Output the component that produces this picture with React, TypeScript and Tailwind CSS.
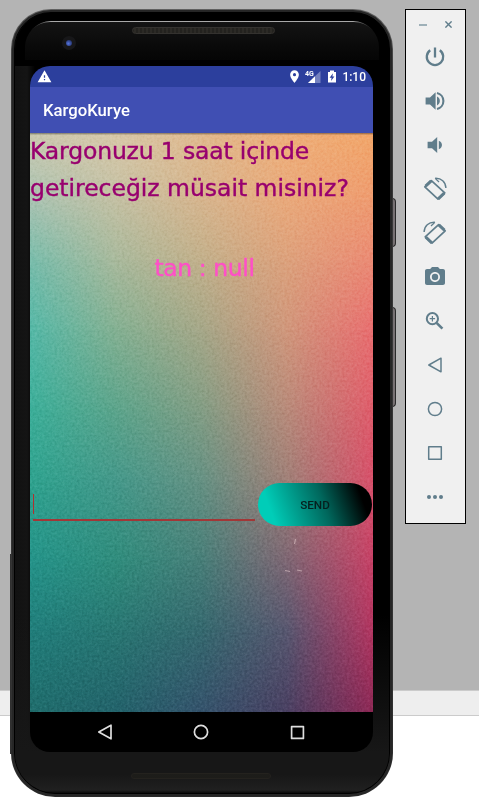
import React from "react";
import {
  MdPhotoCamera,
  MdWarning,
  MdLocationOn,
} from "react-icons/md";

// Wallpaper colours, sampled on a grid; each row is [y, colours from left to right].
const mesh: [number, string[]][] = [
  [0, ["#cbc9b0", "#d8c8a9", "#e0b98e", "#eeaf7a", "#f2a76a"]],
  [67, ["#a9c3b2", "#c3c0a3", "#d6b58e", "#e9a97b", "#ee9b70"]],
  [127, ["#78bcab", "#a8b99c", "#c2b08b", "#dca17c", "#eb8a74"]],
  [197, ["#54b8a7", "#83b092", "#a5a788", "#d0967b", "#e86e70"]],
  [277, ["#3bae99", "#5ba48b", "#829d84", "#b88a7a", "#df5c6b"]],
  [347, ["#2ea28e", "#44988a", "#659183", "#9f7f77", "#d7506a"]],
  [427, ["#249389", "#2f8c7c", "#477e78", "#7e6673", "#c64166"]],
  [497, ["#207d7a", "#287672", "#34686e", "#57566f", "#b23560"]],
  [578, ["#1f6c6b", "#22626a", "#34526b", "#493f61", "#8d2956"]],
];

function Wallpaper() {
  return (
    <svg className="col-start-1 row-start-1 block" width="343" height="579" viewBox="0 0 343 579" aria-hidden="true">
      <defs>
        {mesh.map(([, colors], i) => (
          <linearGradient id={`row${i}`} key={i} x1="0" x2="1" y1="0" y2="0">
            {colors.map((c, j) => (
              <stop key={j} offset={j / 4} stopColor={c} />
            ))}
          </linearGradient>
        ))}
        <linearGradient id="fade" x1="0" x2="0" y1="0" y2="1">
          <stop offset="0" stopColor="#000" />
          <stop offset="1" stopColor="#fff" />
        </linearGradient>
        <mask id="fadeMask" maskContentUnits="objectBoundingBox" x="0" y="0" width="1" height="1">
          <rect width="1" height="1" fill="url(#fade)" />
        </mask>
        <filter id="grain" x="0" y="0" width="1" height="1" colorInterpolationFilters="sRGB">
          <feTurbulence type="fractalNoise" baseFrequency="0.4" numOctaves="3" seed="4" />
          <feColorMatrix values="1 0 0 0 0.02  1 0 0 0 0.02  1 0 0 0 0.02  0 0 0 0 1" />
        </filter>
      </defs>
      {mesh.slice(0, -1).map(([y], i) => {
        const h = mesh[i + 1][0] - y + 1;
        return (
          <g key={i}>
            <rect x="0" y={y} width="343" height={h} fill={`url(#row${i})`} />
            <rect x="0" y={y} width="343" height={h} fill={`url(#row${i + 1})`} mask="url(#fadeMask)" />
          </g>
        );
      })}
      <rect width="343" height="579" filter="url(#grain)" opacity="0.28" className="mix-blend-soft-light" />
      <rect width="343" height="1" fill="#000" opacity="0.3" />
      <rect y="1" width="343" height="1" fill="#000" opacity="0.12" />
      <path d="M265.5 406l-1 5M255 437.5l5 1M267 437l5 1" stroke="#e2c9cb" strokeWidth="1.2" opacity="0.6" />
    </svg>
  );
}

function ToolIcon({ children }: { children: React.ReactNode }) {
  return (
    <svg width="24" height="24" viewBox="0 0 24 24" fill="none" stroke="currentColor">
      {children}
    </svg>
  );
}

function RotateIcon({ flip = false }: { flip?: boolean }) {
  return (
    <svg width="24" height="24" viewBox="0 0 24 24" fill="none" stroke="currentColor" className={flip ? "-scale-x-100" : ""}>
      <path d="M8.4 3.6L21.8 15.8L15 22.2L1.8 9.8Z" strokeWidth="1.7" strokeLinejoin="round" />
      <path d="M2.6 9.2L8.2 3.8M15.2 21.8L21.2 16.2" strokeWidth="3" />
      <path d="M12.2 1.3C18.4 1 22.6 5 22.9 11" strokeWidth="1.4" />
      <path d="M12.2 1.4L16 5" strokeWidth="1.3" />
    </svg>
  );
}

function NavShape({ kind, size, stroke }: { kind: "back" | "home" | "recent"; size: number; stroke: number }) {
  return (
    <svg width={size} height={size} viewBox="0 0 16 16" fill="none" stroke="currentColor" strokeWidth={stroke} strokeLinejoin="round">
      {kind === "back" && <path d="M14 1.2V14.8L1.8 8Z" />}
      {kind === "home" && <circle cx="8" cy="8" r="6.6" />}
      {kind === "recent" && <rect x="1.7" y="1.7" width="12.6" height="12.6" />}
    </svg>
  );
}

function StatusBar() {
  return (
    <div className="flex h-[21px] items-center bg-[#2c3f9d] pl-[7px] pr-[7px] text-white">
      <MdWarning size={15} />
      <div className="ml-auto flex items-center">
        <MdLocationOn size={15} />
        <svg className="ml-[3px]" width="16" height="14" viewBox="0 0 16 14">
          <path d="M15.5 1V13H3Z" fill="#7380bf" />
          <path d="M10 6.3V13H3Z" fill="#fff" />
          <text x="0" y="6" fill="#fff" fontSize="7" fontWeight="700" className="font-[Roboto,sans-serif]">4G</text>
        </svg>
        <svg className="mr-[2px] ml-[6px]" width="10" height="13" viewBox="0 0 10 13">
          <path d="M3 0.5H7V2H9V12.5H1V2H3Z" fill="#fff" />
          <path d="M6 3.2L2.6 7.8H4.6L4 11L7.4 6.4H5.4Z" fill="#2c3f9d" />
        </svg>
        <span className="ml-[3px] font-[Roboto,sans-serif] text-[12px] leading-none font-medium">1:10</span>
      </div>
    </div>
  );
}

function Screen() {
  return (
    <div className="flex h-[686px] w-[343px] flex-col overflow-hidden rounded-[20px] bg-black">
      <StatusBar />
      <header className="flex h-[46px] items-center bg-[#404fb3] pt-[2px] pl-[13px] font-[Roboto,sans-serif] text-[16.7px] font-medium text-white">
        KargoKurye
      </header>
      <main className="grid h-[579px] w-[343px]">
        <Wallpaper />
        <div className="z-10 col-start-1 row-start-1 flex flex-col font-['DejaVu_Sans',sans-serif]">
          <div className="h-[67px] text-[23.5px] leading-[37px] whitespace-nowrap text-[#98006f] [-webkit-text-stroke:0.4px_#98006f]">
            <p className="tracking-[-0.16px]">Kargonuzu 1 saat içinde</p>
            <p className="tracking-[-0.02px]">getireceğiz müsait misiniz?</p>
          </div>
          <p className="mt-[50px] pl-[6px] text-center text-[23.5px] leading-[37px] tracking-[-0.4px] text-[#ff4fc8] [-webkit-text-stroke:0.4px_#ff4fc8]">tan : null</p>
          <div className="mt-[196px] flex h-[44px] pl-[3px]">
            <div className="flex h-[38px] w-[222px] items-center border-b-2 border-[#a23737]">
              <span className="mt-[6px] h-[20px] w-px bg-[#b03030]" />
            </div>
            <button className="ml-[3px] flex h-[43px] w-[114px] items-center justify-center rounded-full bg-[linear-gradient(70deg,#00cdb8_14%,#00675c_57%,#000_88%)] pt-[2px] font-[Roboto,sans-serif] text-[11.7px] font-medium text-[#05201e]">
              SEND
            </button>
          </div>
        </div>
      </main>
      <nav className="flex h-[40px] items-center pl-[67px] text-[#dedede]">
        <NavShape kind="back" size={16} stroke={1.7} />
        <span className="ml-[80px]"><NavShape kind="home" size={16} stroke={1.7} /></span>
        <span className="ml-[81px]"><NavShape kind="recent" size={15} stroke={1.8} /></span>
      </nav>
    </div>
  );
}

function Phone() {
  return (
    <div className="relative mt-[9px] ml-[11px] h-[788px] w-[382px]">
      <span className="absolute top-[545px] -left-px h-[200px] w-[3px] bg-[#303030]" />
      <span className="absolute top-[189px] left-[381px] h-[49px] w-[4px] rounded-r-sm border border-[#292929] bg-[#777173]" />
      <span className="absolute top-[298px] left-[381px] h-[100px] w-[4px] rounded-r-sm border border-[#292929] bg-[#777173]" />
      <div className="relative h-full rounded-t-[40px] rounded-b-[44px] bg-[linear-gradient(180deg,#606060,#3a3a3a_8%,#333_85%,#2a2a2a)] p-px">
        <div className="h-full rounded-t-[39px] rounded-b-[43px] bg-[#262626] p-[2px]">
          <div className="flex h-full flex-col overflow-hidden rounded-t-[37px] rounded-b-[41px] border border-black bg-[linear-gradient(90deg,#111,#141414_12px,#000_20px,#000)]">
            <div className="flex h-[53px] shrink-0 flex-col bg-black px-[10px] pt-[8px]">
              <div className="flex h-[39px] rounded-t-[26px] bg-[linear-gradient(90deg,#000_6px,#a9a9a9_26px,#a9a9a9_328px,#000_348px)] pt-px">
                <div className="flex w-full items-start rounded-t-[25px] bg-linear-to-b from-[#141414] to-[#050505]">
                  <span className="mt-[14px] ml-[37px] flex h-[14px] w-[14px] items-center justify-center rounded-full bg-[#171719]">
                    <span className="h-[6px] w-[6px] rounded-full bg-radial-[at_40%_60%] from-[#5575e0] to-[#141c42]" />
                  </span>
                  <span className="mt-[5px] ml-[56px] h-[7px] w-[143px] rounded-full border border-[#34322f] bg-[repeating-linear-gradient(90deg,#1f1e1b_0px,#302e29_2px,#1f1e1b_4px)]" />
                </div>
              </div>
            </div>
            <div className="bg-[linear-gradient(180deg,transparent_80%,#171717)] pl-[15px]"><Screen /></div>
            <div className="flex h-[45px] shrink-0 justify-center bg-linear-to-b from-[#171717] from-50% via-[#202020] via-85% to-black pt-[21px] pr-[3px]">
              <span className="h-[6px] w-[140px] rounded-full border border-[#24221e] bg-[repeating-linear-gradient(90deg,#151513_0px,#252420_1px,#151513_2px)]" />
            </div>
          </div>
        </div>
      </div>
    </div>
  );
}

function Toolbar() {
  return (
    <aside className="mt-[9px] ml-[12px] flex h-[515px] w-[61px] flex-col border border-black bg-[#f0f0f0] text-[#607d8b]">
      <div className="flex h-[25px] items-center pt-[4px] pl-[13px]">
        <span className="h-[2px] w-[8px] bg-[#9eb0b8]" />
        <svg className="ml-[18px]" width="7" height="7" viewBox="0 0 7 7" stroke="currentColor" strokeWidth="1.4">
          <path d="M0.4 0.4L6.6 6.6M6.6 0.4L0.4 6.6" />
        </svg>
      </div>
      <div className="flex flex-col items-center pr-[1px] [&>div]:flex [&>div]:h-[44px] [&>div]:items-center">
        <div>
          <ToolIcon>
            <path d="M12 2.6V12.6M7.2 5.2A8.2 8.2 0 1 0 16.8 5.2" strokeWidth="2.3" />
          </ToolIcon>
        </div>
        <div>
          <ToolIcon>
            <path d="M2.6 8.6H7L12.6 3.2V20.8L7 15.4H2.6Z" fill="currentColor" stroke="none" />
            <path d="M14 7.6C17.8 9 17.8 15 14 16.4Z" fill="currentColor" stroke="none" />
            <path d="M14 4A8.2 8.2 0 0 1 14 20" strokeWidth="2.1" />
          </ToolIcon>
        </div>
        <div>
          <ToolIcon>
            <path d="M4.6 8.8H9L14.2 4V20L9 15.2H4.6Z" fill="currentColor" stroke="none" />
            <path d="M15.8 7.8C20 9.4 20 14.6 15.8 16.2Z" fill="currentColor" stroke="none" />
          </ToolIcon>
        </div>
        <div><RotateIcon /></div>
        <div><RotateIcon flip /></div>
        <div><MdPhotoCamera size={24} /></div>
        <div>
          <ToolIcon>
            <circle cx="9.4" cy="9.7" r="5.6" strokeWidth="2" />
            <path d="M9.4 7V12.4M6.7 9.7H12.1" strokeWidth="1.2" />
            <path d="M13.6 13.9L19.4 19.7" strokeWidth="2.6" />
          </ToolIcon>
        </div>
        <div><NavShape kind="back" size={16} stroke={1.5} /></div>
        <div><NavShape kind="home" size={16} stroke={1.5} /></div>
        <div><NavShape kind="recent" size={16} stroke={1.5} /></div>
        <div>
          <ToolIcon>
            <g fill="currentColor" stroke="none">
              <circle cx="6" cy="12" r="2" />
              <circle cx="12" cy="12" r="2" />
              <circle cx="18" cy="12" r="2" />
            </g>
          </ToolIcon>
        </div>
      </div>
    </aside>
  );
}

export default function App() {
  return (
    <div className="grid h-[807px] w-[479px] overflow-hidden bg-white">
      <div className="col-start-1 row-start-1">
        <div className="h-[690px] bg-[#b4b4b4]" />
        <div className="h-[26px] border-y border-[#cbcbcb] bg-[#eeeeee]" />
      </div>
      <div className="z-10 col-start-1 row-start-1 flex items-start">
        <Phone />
        <Toolbar />
      </div>
    </div>
  );
}
